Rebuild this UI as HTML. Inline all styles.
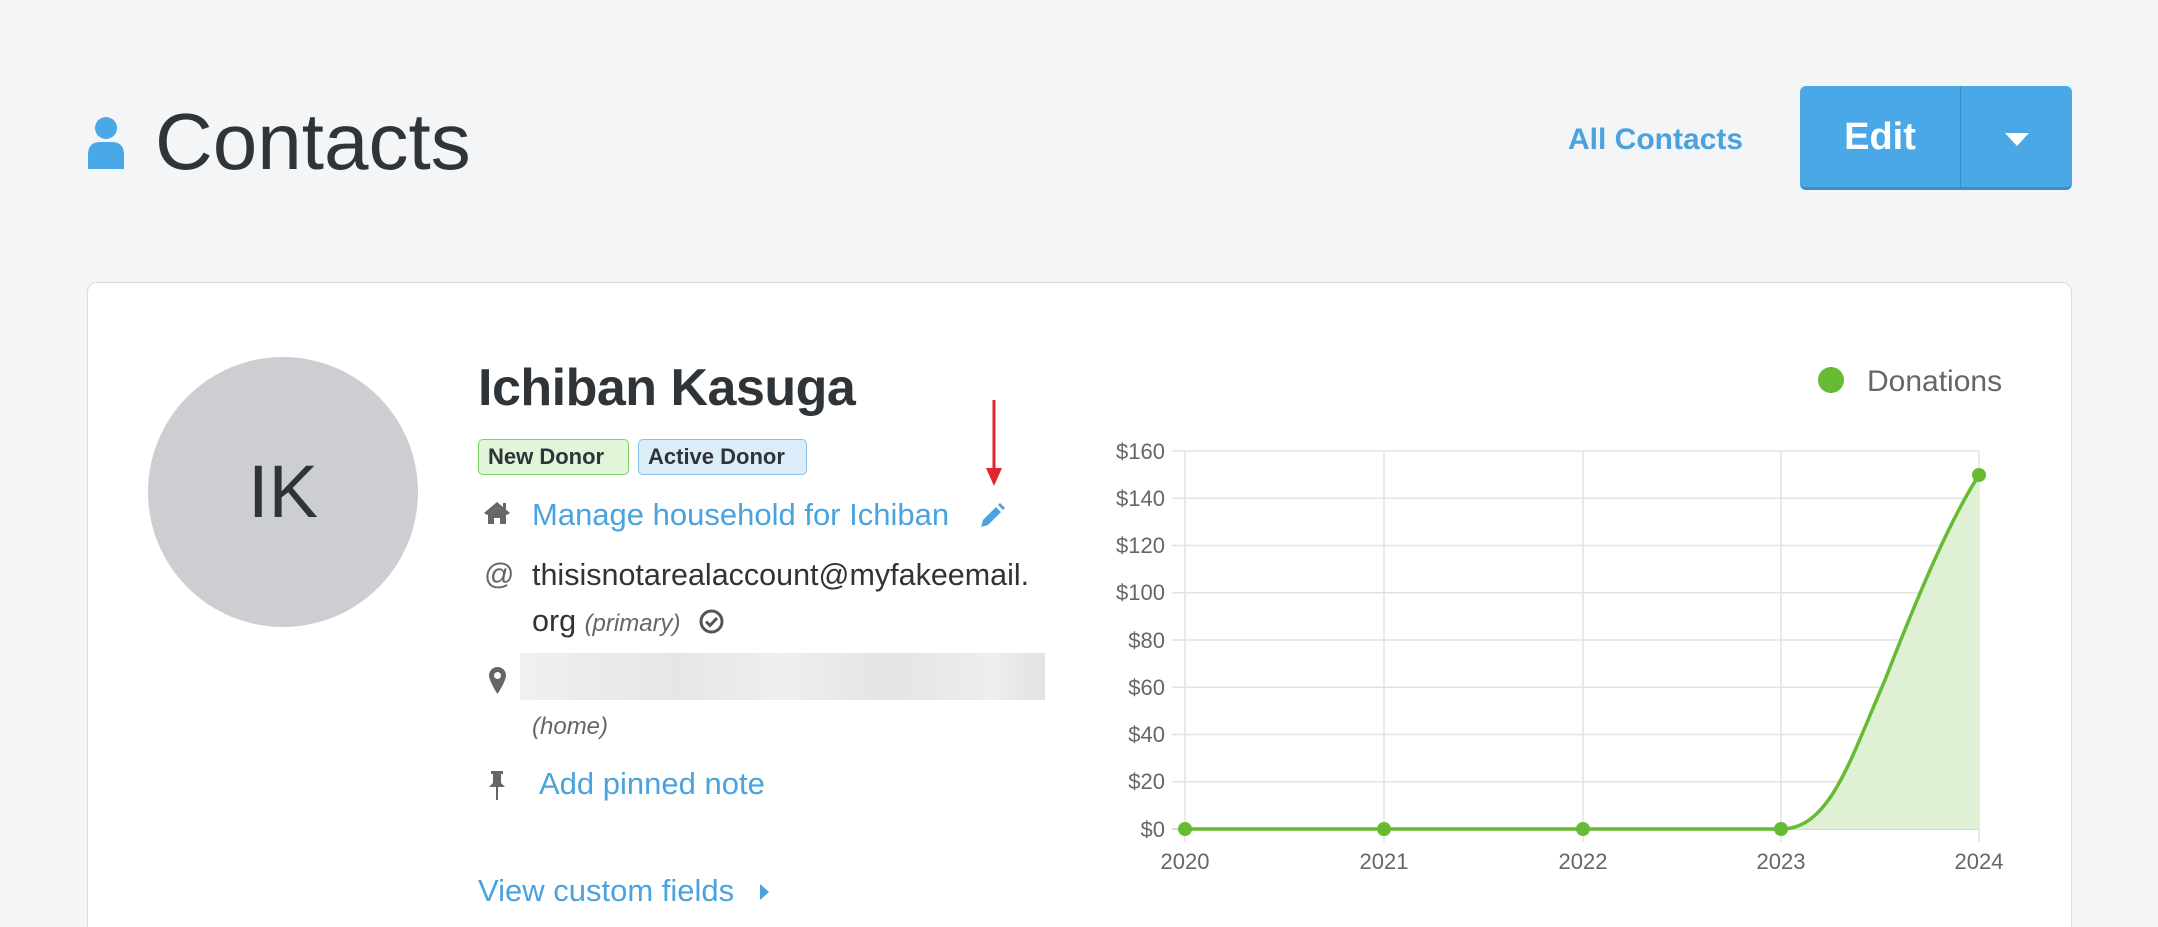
<!DOCTYPE html>
<html style="height:927px;overflow:hidden"><head><meta charset="utf-8"><style>
*{margin:0;padding:0;box-sizing:border-box}
body{width:2158px;height:927px;background:#f4f5f7;font-family:"Liberation Sans",sans-serif;position:relative;overflow:hidden;color:#2f3438}
.a{position:absolute;white-space:nowrap}
.card{position:absolute;left:87px;top:282px;width:1985px;height:645px;background:#fff;border:1px solid #d9dcdf;border-bottom:none;border-radius:10px 10px 0 0}
.badge{position:absolute;top:439px;height:36px;border-radius:5px;font-size:22px;font-weight:bold;line-height:34px;padding:0 9px;color:#2f3438}
.link{color:#4aa3df}
</style></head><body>
<svg class="a" style="left:86px;top:115px" width="40" height="54" viewBox="0 0 40 54"><circle cx="20" cy="13" r="11" fill="#4aa8e6"/><path d="M2 54 V40 Q2 27 14 27 H26 Q38 27 38 40 V54 Z" fill="#4aa8e6"/></svg>
<div class="a" style="left:155px;top:97px;font-size:80px;line-height:90px;color:#2f3438">Contacts</div>
<div class="a link" style="left:1568px;top:122px;font-size:30px;font-weight:bold;line-height:36px">All Contacts</div>
<div class="a" style="left:1800px;top:86px;width:272px;height:104px;background:#4aa8e6;border-radius:6px;border-bottom:3px solid #3a8fc8"></div>
<div class="a" style="left:1960px;top:86px;width:1px;height:104px;background:#3a8fc8"></div>
<div class="a" style="left:1800px;top:115px;width:160px;text-align:center;color:#fff;font-size:38px;font-weight:bold;line-height:45px">Edit</div>
<svg class="a" style="left:2005px;top:133px" width="24" height="13"><path d="M0 0 H24 L12 13 Z" fill="#fff"/></svg>
<div class="card"></div>
<div class="a" style="left:148px;top:357px;width:270px;height:270px;border-radius:50%;background:#ccced1;text-align:center;line-height:270px;font-size:74px;color:#2f3438">IK</div>
<div class="a" style="left:478px;top:356px;font-size:52px;font-weight:bold;line-height:64px;color:#2f3438;letter-spacing:-0.5px">Ichiban Kasuga</div>
<div class="badge" style="left:478px;width:151px;background:#e1f5d9;border:1px solid #7fcf5f">New Donor</div>
<div class="badge" style="left:638px;width:169px;background:#dcedfa;border:1px solid #86c1ea">Active Donor</div>
<svg class="a" style="left:483px;top:501px" width="28" height="24" viewBox="0 0 28 24"><path d="M14 1 L27 12 L24 14 L14 6 L4 14 L1 12 Z" fill="#666"/><path d="M5 13 L14 6 L23 13 V23 H17 V17 H11 V23 H5 Z" fill="#666"/><rect x="20" y="2" width="3" height="7" fill="#666"/></svg>
<div class="a link" style="left:532px;top:497px;font-size:31px;line-height:36px">Manage household for Ichiban</div>
<svg class="a" style="left:979px;top:503px" width="26" height="26" viewBox="0 0 26 26"><path d="M2 24 L4 17 L17 4 L22 9 L9 22 Z" fill="#4aa3df"/><path d="M19 2 L21 0 L26 5 L24 7 Z" fill="#4aa3df"/></svg>
<svg class="a" style="left:985px;top:400px" width="18" height="88"><rect x="7.5" y="0" width="3" height="70" fill="#e0262a"/><path d="M1 68 H17 L9 86 Z" fill="#e0262a"/></svg>
<div class="a" style="left:484px;top:557px;font-size:30px;line-height:36px;color:#666">@</div>
<div class="a" style="left:532px;top:557px;font-size:30.5px;line-height:36px;color:#2f3438">thisisnotarealaccount@myfakeemail.</div>
<div class="a" style="left:532px;top:603px;font-size:30.5px;line-height:36px;color:#2f3438">org <i style="font-size:24px;color:#666">(primary)</i></div>
<svg class="a" style="left:699px;top:609px" width="25" height="25" viewBox="0 0 25 25"><circle cx="12.5" cy="12.5" r="10.5" fill="none" stroke="#555" stroke-width="3"/><path d="M7 12.5 L11 16.5 L18 9" fill="none" stroke="#555" stroke-width="3"/></svg>
<svg class="a" style="left:489px;top:667px" width="17" height="27" viewBox="0 0 17 27"><path d="M8.5 0 A8.5 8.5 0 0 1 17 8.5 C17 14 8.5 27 8.5 27 C8.5 27 0 14 0 8.5 A8.5 8.5 0 0 1 8.5 0 Z" fill="#666"/><circle cx="8.5" cy="8.5" r="3.5" fill="#fff"/></svg>
<div class="a" style="left:520px;top:653px;width:525px;height:47px;background:linear-gradient(90deg,#f0f0f0,#e6e6e6 30%,#efefef 50%,#e4e4e4 70%,#eeeeee 90%,#e2e2e2)"></div>
<div class="a" style="left:532px;top:711px;font-size:24px;line-height:32px;color:#666;font-style:italic">(home)</div>
<svg class="a" style="left:487px;top:771px" width="20" height="30" viewBox="0 0 20 30"><rect x="4" y="0" width="12" height="3" fill="#666"/><rect x="6" y="3" width="8" height="10" fill="#666"/><path d="M2 16 L6 12 H14 L18 16 Z" fill="#666"/><rect x="9" y="16" width="2" height="13" fill="#666"/></svg>
<div class="a link" style="left:539px;top:766px;font-size:31px;line-height:36px">Add pinned note</div>
<div class="a link" style="left:478px;top:873px;font-size:31px;line-height:36px">View custom fields</div>
<svg class="a" style="left:760px;top:884px" width="10" height="16"><path d="M0 0 L9 8 L0 16 Z" fill="#4aa3df"/></svg>
<svg class="a" style="left:1080px;top:330px" width="1000" height="597" viewBox="1080 330 1000 597" font-family="Liberation Sans, sans-serif">
<circle cx="1831" cy="380" r="13" fill="#66bb33"/>
<text x="1867" y="391" font-size="30" fill="#666">Donations</text>
<g stroke="#e3e3e3" stroke-width="1.5">
<line x1="1172" y1="451" x2="1979" y2="451"/><line x1="1172" y1="498.25" x2="1979" y2="498.25"/><line x1="1172" y1="545.5" x2="1979" y2="545.5"/><line x1="1172" y1="592.75" x2="1979" y2="592.75"/><line x1="1172" y1="640" x2="1979" y2="640"/><line x1="1172" y1="687.25" x2="1979" y2="687.25"/><line x1="1172" y1="734.5" x2="1979" y2="734.5"/><line x1="1172" y1="781.75" x2="1979" y2="781.75"/>
<line x1="1185" y1="451" x2="1185" y2="842"/><line x1="1384" y1="451" x2="1384" y2="842"/><line x1="1583" y1="451" x2="1583" y2="842"/><line x1="1781" y1="451" x2="1781" y2="842"/><line x1="1979" y1="451" x2="1979" y2="842"/>
</g>
<line x1="1172" y1="829" x2="1979" y2="829" stroke="#ccc" stroke-width="1.5"/>
<g font-size="22" fill="#666" text-anchor="end">
<text x="1165" y="459">$160</text><text x="1165" y="506">$140</text><text x="1165" y="553">$120</text><text x="1165" y="600">$100</text><text x="1165" y="648">$80</text><text x="1165" y="695">$60</text><text x="1165" y="742">$40</text><text x="1165" y="789">$20</text><text x="1165" y="837">$0</text>
</g>
<g font-size="22" fill="#666" text-anchor="middle">
<text x="1185" y="869">2020</text><text x="1384" y="869">2021</text><text x="1583" y="869">2022</text><text x="1781" y="869">2023</text><text x="1979" y="869">2024</text>
</g>
<path d="M1781 829 C1830 829 1850 760 1885 680 C1920 590 1950 520 1979 475 V829 Z" fill="#dff0d4"/>
<path d="M1185 829 H1781 C1830 829 1850 760 1885 680 C1920 590 1950 520 1979 475" fill="none" stroke="#66bb33" stroke-width="3.5"/>
<g fill="#66bb33"><circle cx="1185" cy="829" r="7"/><circle cx="1384" cy="829" r="7"/><circle cx="1583" cy="829" r="7"/><circle cx="1781" cy="829" r="7"/><circle cx="1979" cy="475" r="7"/></g>
</svg>
</body></html>
